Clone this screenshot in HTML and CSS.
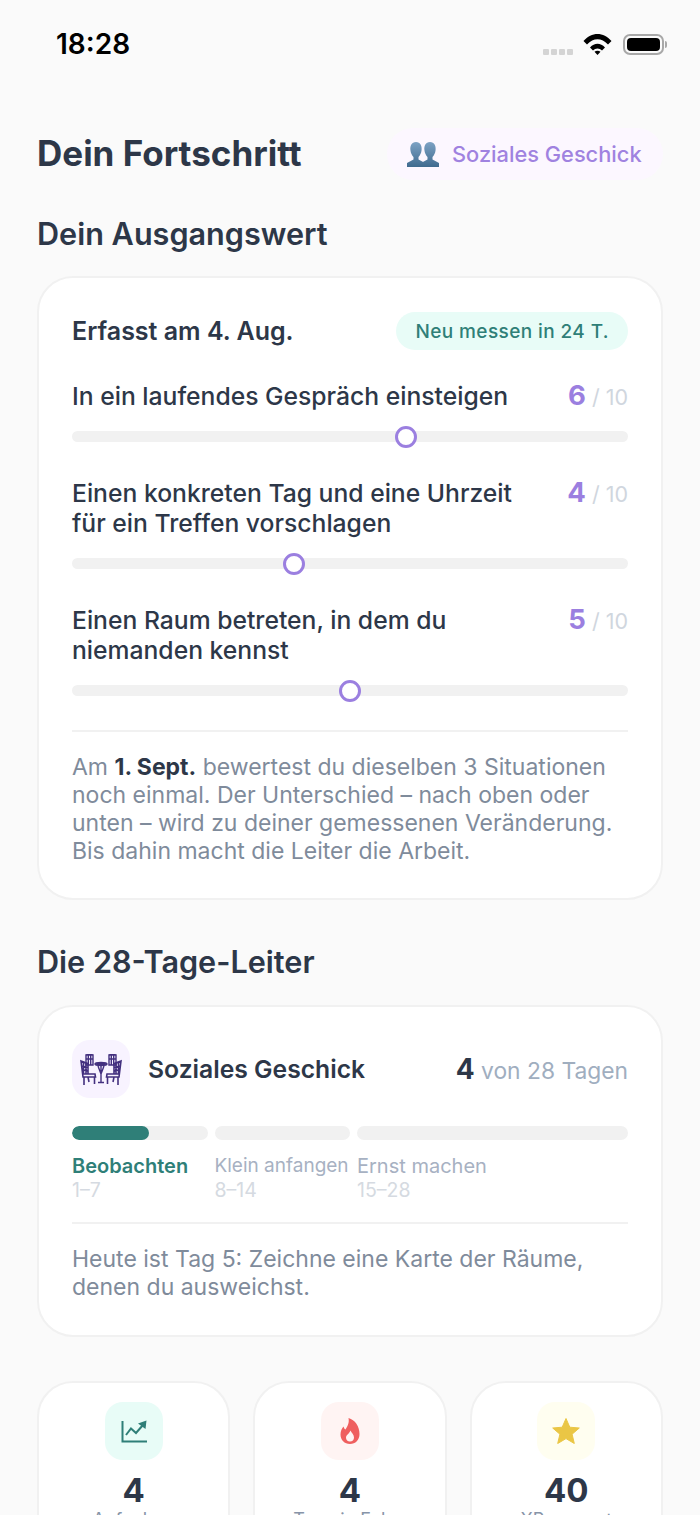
FILE: index.html
```html
<!DOCTYPE html>
<html lang="de">
<head>
  <meta charset="UTF-8" />
  <title>Dein Fortschritt</title>
  <link rel="stylesheet" href="styles.css">
</head>
<body>

  <div class="statusbar">
    <span class="time">18:28</span>
    <div class="status-icons">
      <span class="signal"><i></i><i></i><i></i><i></i></span>
      <svg class="wifi" width="29" height="22" viewBox="0 0 29 22">
        <path d="M.5 8C8.500-1.500 20.500-1.500 28.500 8L25 11.500C18.500 4.500 10.500 4.500 4 11.500Z" fill="#000"/>
        <path d="M7 14.500C11.500 9.500 17.500 9.500 22 14.500L19 17.500C16.500 14.800 12.500 14.800 10 17.500Z" fill="#000"/>
        <path d="M11.500 18.800C13.200 17.500 15.800 17.500 17.500 18.800L14.500 22Z" fill="#000"/>
      </svg>
      <span class="battery"><i></i></span>
      <span class="battery-cap"></span>
    </div>
  </div>

  <div class="page">
    <div class="top-row">
      <h1>Dein Fortschritt</h1>
      <div class="skill-pill">
        <svg width="32" height="26" viewBox="0 0 32 26">
          <defs>
            <linearGradient id="bust" x1="0" y1="0" x2="0" y2="1">
              <stop offset="0" stop-color="#7da2c4"/>
              <stop offset="1" stop-color="#3f6b8f"/>
            </linearGradient>
          </defs>
          <path d="M9 1C4.500 1 3 5 3.400 9C3.700 12 5 14.500 6.500 16L6.500 18.500L0 22V26H18V22L11.500 18.500V16C13 14.500 14.300 12 14.600 9C15 5 13.500 1 9 1Z" fill="url(#bust)"/>
          <path d="M23 1C18.500 1 17 5 17.400 9C17.700 12 19 14.500 20.500 16L20.500 18.500L14 22V26H32V22L25.500 18.500V16C27 14.500 28.300 12 28.600 9C29 5 27.500 1 23 1Z" fill="url(#bust)"/>
        </svg>
        <span>Soziales Geschick</span>
      </div>
    </div>

    <h2>Dein Ausgangswert</h2>
    <div class="card baseline">
      <div class="card-head">
        <span class="recorded">Erfasst am 4. Aug.</span>
        <span class="remeasure">Neu messen in 24 T.</span>
      </div>

      <div class="item">
        <div class="item-row">
          <span class="item-text">In ein laufendes Gespräch einsteigen</span>
          <span class="score"><b>6</b> / 10</span>
        </div>
        <div class="track"><span class="thumb" style="left: 60%"></span></div>
      </div>

      <div class="item">
        <div class="item-row">
          <span class="item-text">Einen konkreten Tag und eine Uhrzeit<br>für ein Treffen vorschlagen</span>
          <span class="score"><b>4</b> / 10</span>
        </div>
        <div class="track"><span class="thumb" style="left: 40%"></span></div>
      </div>

      <div class="item">
        <div class="item-row">
          <span class="item-text">Einen Raum betreten, in dem du<br>niemanden kennst</span>
          <span class="score"><b>5</b> / 10</span>
        </div>
        <div class="track"><span class="thumb" style="left: 50%"></span></div>
      </div>

      <p class="note">Am <strong>1. Sept.</strong> bewertest du dieselben 3 Situationen noch einmal. Der Unterschied – nach oben oder unten – wird zu deiner gemessenen Veränderung. Bis dahin macht die Leiter die Arbeit.</p>
    </div>

    <h2 class="second">Die 28-Tage-Leiter</h2>
    <div class="card ladder">
      <div class="ladder-head">
        <div class="ladder-icon">
          <svg width="42" height="31" viewBox="0 0 42 31" fill="none" stroke="#43307f" stroke-width="1.400">
            <!-- table -->
            <ellipse cx="21" cy="10" rx="6" ry="1.500" fill="#43307f"/>
            <path d="M21 11V28M18 28.500H24M18 12L21 20L24 12"/>
            <!-- back chairs -->
            <path d="M6 1H13V11H6ZM8.300 1V11M10.700 1V11M6 1L9.500 0L13 1M6 5H13"/>
            <path d="M29 1H36V11H29ZM31.300 1V11M33.700 1V11M29 1L32.500 0L36 1M29 5H36"/>
            <!-- front chairs -->
            <path d="M1 7L8 9.500V20H15L15.500 23H3L1 7ZM3.500 8V20M6 9V20M2 12L8 13.500M4 16L8 17M3 20H15M4 23V31M14.500 23V30M8 23L9 28" stroke-width="1.600"/>
            <path d="M41 7L34 9.500V20H27L26.500 23H39L41 7ZM38.500 8V20M36 9V20M40 12L34 13.500M38 16L34 17M39 20H27M38 23V31M27.500 23V30M34 23L33 28" stroke-width="1.600"/>
          </svg>
        </div>
        <span class="ladder-name">Soziales Geschick</span>
        <span class="days"><b>4</b> von 28 Tagen</span>
      </div>

      <div class="phases">
        <div class="phase">
          <div class="phase-bar"><span class="phase-fill" style="width: 57%"></span></div>
          <div class="phase-name active">Beobachten</div>
          <div class="phase-range">1–7</div>
        </div>
        <div class="phase">
          <div class="phase-bar"></div>
          <div class="phase-name narrow">Klein anfangen</div>
          <div class="phase-range">8–14</div>
        </div>
        <div class="phase wide">
          <div class="phase-bar"></div>
          <div class="phase-name">Ernst machen</div>
          <div class="phase-range">15–28</div>
        </div>
      </div>

      <p class="note">Heute ist Tag 5: Zeichne eine Karte der Räume, denen du ausweichst.</p>
    </div>

    <div class="stats">
      <div class="stat">
        <div class="stat-icon green">
          <svg width="26" height="23" viewBox="0 0 26 23" fill="none" stroke="#2f7f78" stroke-width="2">
            <path d="M1.500 1V21.500H26"/>
            <path d="M5 15L10 8.500L15 13L22 5"/>
            <path d="M17 3.500L25.500 .5L24.500 9Z" fill="#2f7f78" stroke="none"/>
          </svg>
        </div>
        <div class="stat-num">4</div>
        <div class="stat-label">Aufgaben</div>
      </div>
      <div class="stat">
        <div class="stat-icon red">
          <svg width="20" height="26" viewBox="0 0 20 26">
            <path d="M8.500 0C15 2 19.500 8 19.500 16C19.500 22 15.500 26 10 26C4.500 26 .5 22 .5 16.500C.5 13 2 10 3.500 8.500C4 10 4.500 11 5.500 11.500C7.500 8 9.500 5 8.500 0Z" fill="#ef5f5f"/>
            <path d="M10.500 12.500C11.500 15 14 16.500 14 19.500C14 22 12.300 23.500 10 23.500C7.700 23.500 6 22 6 19.700C6 17 9.500 15.500 10.500 12.500Z" fill="#fff4f3"/>
          </svg>
        </div>
        <div class="stat-num">4</div>
        <div class="stat-label">Tage in Folge</div>
      </div>
      <div class="stat">
        <div class="stat-icon yellow">
          <svg width="28" height="26" viewBox="0 0 28 26">
            <path d="M14 0.500L17.800 9.200L27.300 10L20.100 16.200L22.300 25.500L14 20.600L5.700 25.500L7.900 16.200L0.700 10L10.200 9.200Z" fill="#eac645" stroke="#eac645" stroke-linejoin="round"/>
          </svg>
        </div>
        <div class="stat-num">40</div>
        <div class="stat-label">XP gesamt</div>
      </div>
    </div>
  </div>

</body>
</html>
```

FILE: styles.css
```css
* {
  box-sizing: border-box;
}

html, body {
  height: 1515px;
  overflow: hidden;
}

body {
  margin: 0;
  background: #fafafa;
  font-family: Inter, "Liberation Sans", sans-serif;
  color: #2d3748;
}

.statusbar {
  height: 88px;
  padding: 0 33px 0 56px;
  display: flex;
  justify-content: space-between;
  align-items: center;
}

.time {
  font-size: 28px;
  font-weight: 600;
  color: #000;
}

.status-icons {
  display: flex;
  align-items: center;
}

.signal {
  display: flex;
  gap: 2px;
  margin: 15px 10px 0 0;
}

.signal i {
  width: 6px;
  height: 6px;
  border-radius: 1px;
  background: #d4d4d4;
}

.wifi {
  margin-right: 11px;
}

.battery {
  width: 41px;
  height: 21px;
  border: 2px solid #a8a8a8;
  border-radius: 7px;
  padding: 2px;
  display: flex;
}

.battery i {
  flex: 1;
  background: #000;
  border-radius: 4px;
}

.battery-cap {
  width: 2px;
  height: 7px;
  margin-left: 1px;
  background: #a8a8a8;
  border-radius: 0 2px 2px 0;
}

.page {
  padding: 0 37px;
}

.top-row {
  display: flex;
  justify-content: space-between;
  align-items: center;
  margin-top: 40px;
  height: 52px;
}

h1 {
  margin: 0 0 3px;
  font-size: 35px;
  font-weight: 700;
}

.skill-pill {
  width: 276px;
  height: 52px;
  display: flex;
  align-items: center;
  gap: 13px;
  padding-left: 20px;
  background: #fcf7ff;
  border-radius: 26px;
  font-size: 21.8px;
  font-weight: 500;
  color: #a082e0;
}

h2 {
  margin: 36px 0 24px;
  font-size: 30.6px;
  line-height: 36px;
  font-weight: 600;
}

h2.second {
  margin: 44px 0 25px;
}

.card {
  background: #fff;
  border: 2px solid #f1f1f1;
  border-radius: 36px;
  padding: 34px 33px 33px;
}

.card-head {
  display: flex;
  justify-content: space-between;
  align-items: center;
  height: 38px;
}

.recorded {
  font-size: 25px;
  font-weight: 600;
}

.remeasure {
  height: 38px;
  padding: 0 19px;
  display: flex;
  align-items: center;
  background: #e8fcf7;
  border-radius: 19px;
  font-size: 19px;
  font-weight: 500;
  letter-spacing: 0.4px;
  color: #2f7f78;
}

.item {
  margin-top: 36px;
}

.card-head + .item {
  margin-top: 31px;
}

.item-row {
  display: flex;
  justify-content: space-between;
  align-items: flex-start;
}

.item-text {
  font-size: 24.7px;
  line-height: 30px;
  font-weight: 500;
}

.score {
  height: 30px;
  padding-top: 1px;
  font-size: 21.5px;
  line-height: 30px;
  color: #d0d6de;
}

.score b {
  font-size: 27.5px;
  line-height: 1;
  font-weight: 700;
  color: #9b7fe0;
}

.track {
  position: relative;
  height: 11px;
  margin-top: 20px;
  background: #f1f1f1;
  border-radius: 6px;
}

.thumb {
  position: absolute;
  top: -5.5px;
  width: 22px;
  height: 22px;
  margin-left: -11px;
  background: #fff;
  border: 3.5px solid #9b7fe0;
  border-radius: 50%;
}

.note {
  margin: 0;
  padding-top: 21px;
  border-top: 2px solid #f1f1f1;
  font-size: 23px;
  line-height: 28px;
  color: #7f8b9b;
}

.note strong {
  font-weight: 700;
  color: #2d3748;
}

.baseline .note {
  margin-top: 34px;
}

.ladder {
  padding: 33px 33px 34px;
}

.ladder-head {
  display: flex;
  align-items: center;
}

.ladder-icon {
  width: 58px;
  height: 58px;
  display: flex;
  align-items: center;
  justify-content: center;
  background: #f8f3ff;
  border-radius: 18px;
}

.ladder-name {
  flex: 1;
  margin-left: 18px;
  font-size: 24.7px;
  font-weight: 600;
}

.days {
  font-size: 22.8px;
  color: #a0aebf;
}

.days b {
  font-size: 28px;
  line-height: 1;
  font-weight: 700;
  color: #2d3748;
}

.phases {
  display: flex;
  gap: 7px;
  margin-top: 28px;
  padding-bottom: 21px;
}

.phase {
  flex: 1;
  min-width: 0;
  white-space: nowrap;
}

.phase.wide {
  flex: 2;
}

.phase-bar {
  height: 14px;
  background: #f1f1f1;
  border-radius: 7px;
  overflow: hidden;
}

.phase-fill {
  display: block;
  height: 100%;
  background: #2f7f78;
  border-radius: 7px;
}

.phase-name {
  margin-top: 14px;
  font-size: 20px;
  line-height: 24px;
  color: #a7b1c2;
}

.phase-name.narrow {
  font-size: 19px;
}

.phase-name.active {
  font-weight: 600;
  color: #2f7f78;
}

.phase-range {
  margin-top: 1px;
  font-size: 19.5px;
  line-height: 22px;
  color: #d5dae1;
}

.stats {
  display: grid;
  grid-template-columns: repeat(3, 1fr);
  gap: 23px;
  margin-top: 44px;
}

.stat {
  height: 180px;
  padding-top: 19px;
  display: flex;
  flex-direction: column;
  align-items: center;
  background: #fff;
  border: 2px solid #f1f1f1;
  border-radius: 36px;
}

.stat-icon {
  width: 58px;
  height: 58px;
  display: flex;
  align-items: center;
  justify-content: center;
  border-radius: 18px;
}

.stat-icon.green {
  background: #e8fcf7;
}

.stat-icon.red {
  background: #fff4f3;
}

.stat-icon.yellow {
  background: #fffef0;
}

.stat-num {
  margin-top: 10px;
  font-size: 33px;
  line-height: 40px;
  font-weight: 700;
}

.stat-label {
  margin-top: -1px;
  font-size: 18px;
  color: #8794a8;
}
```
